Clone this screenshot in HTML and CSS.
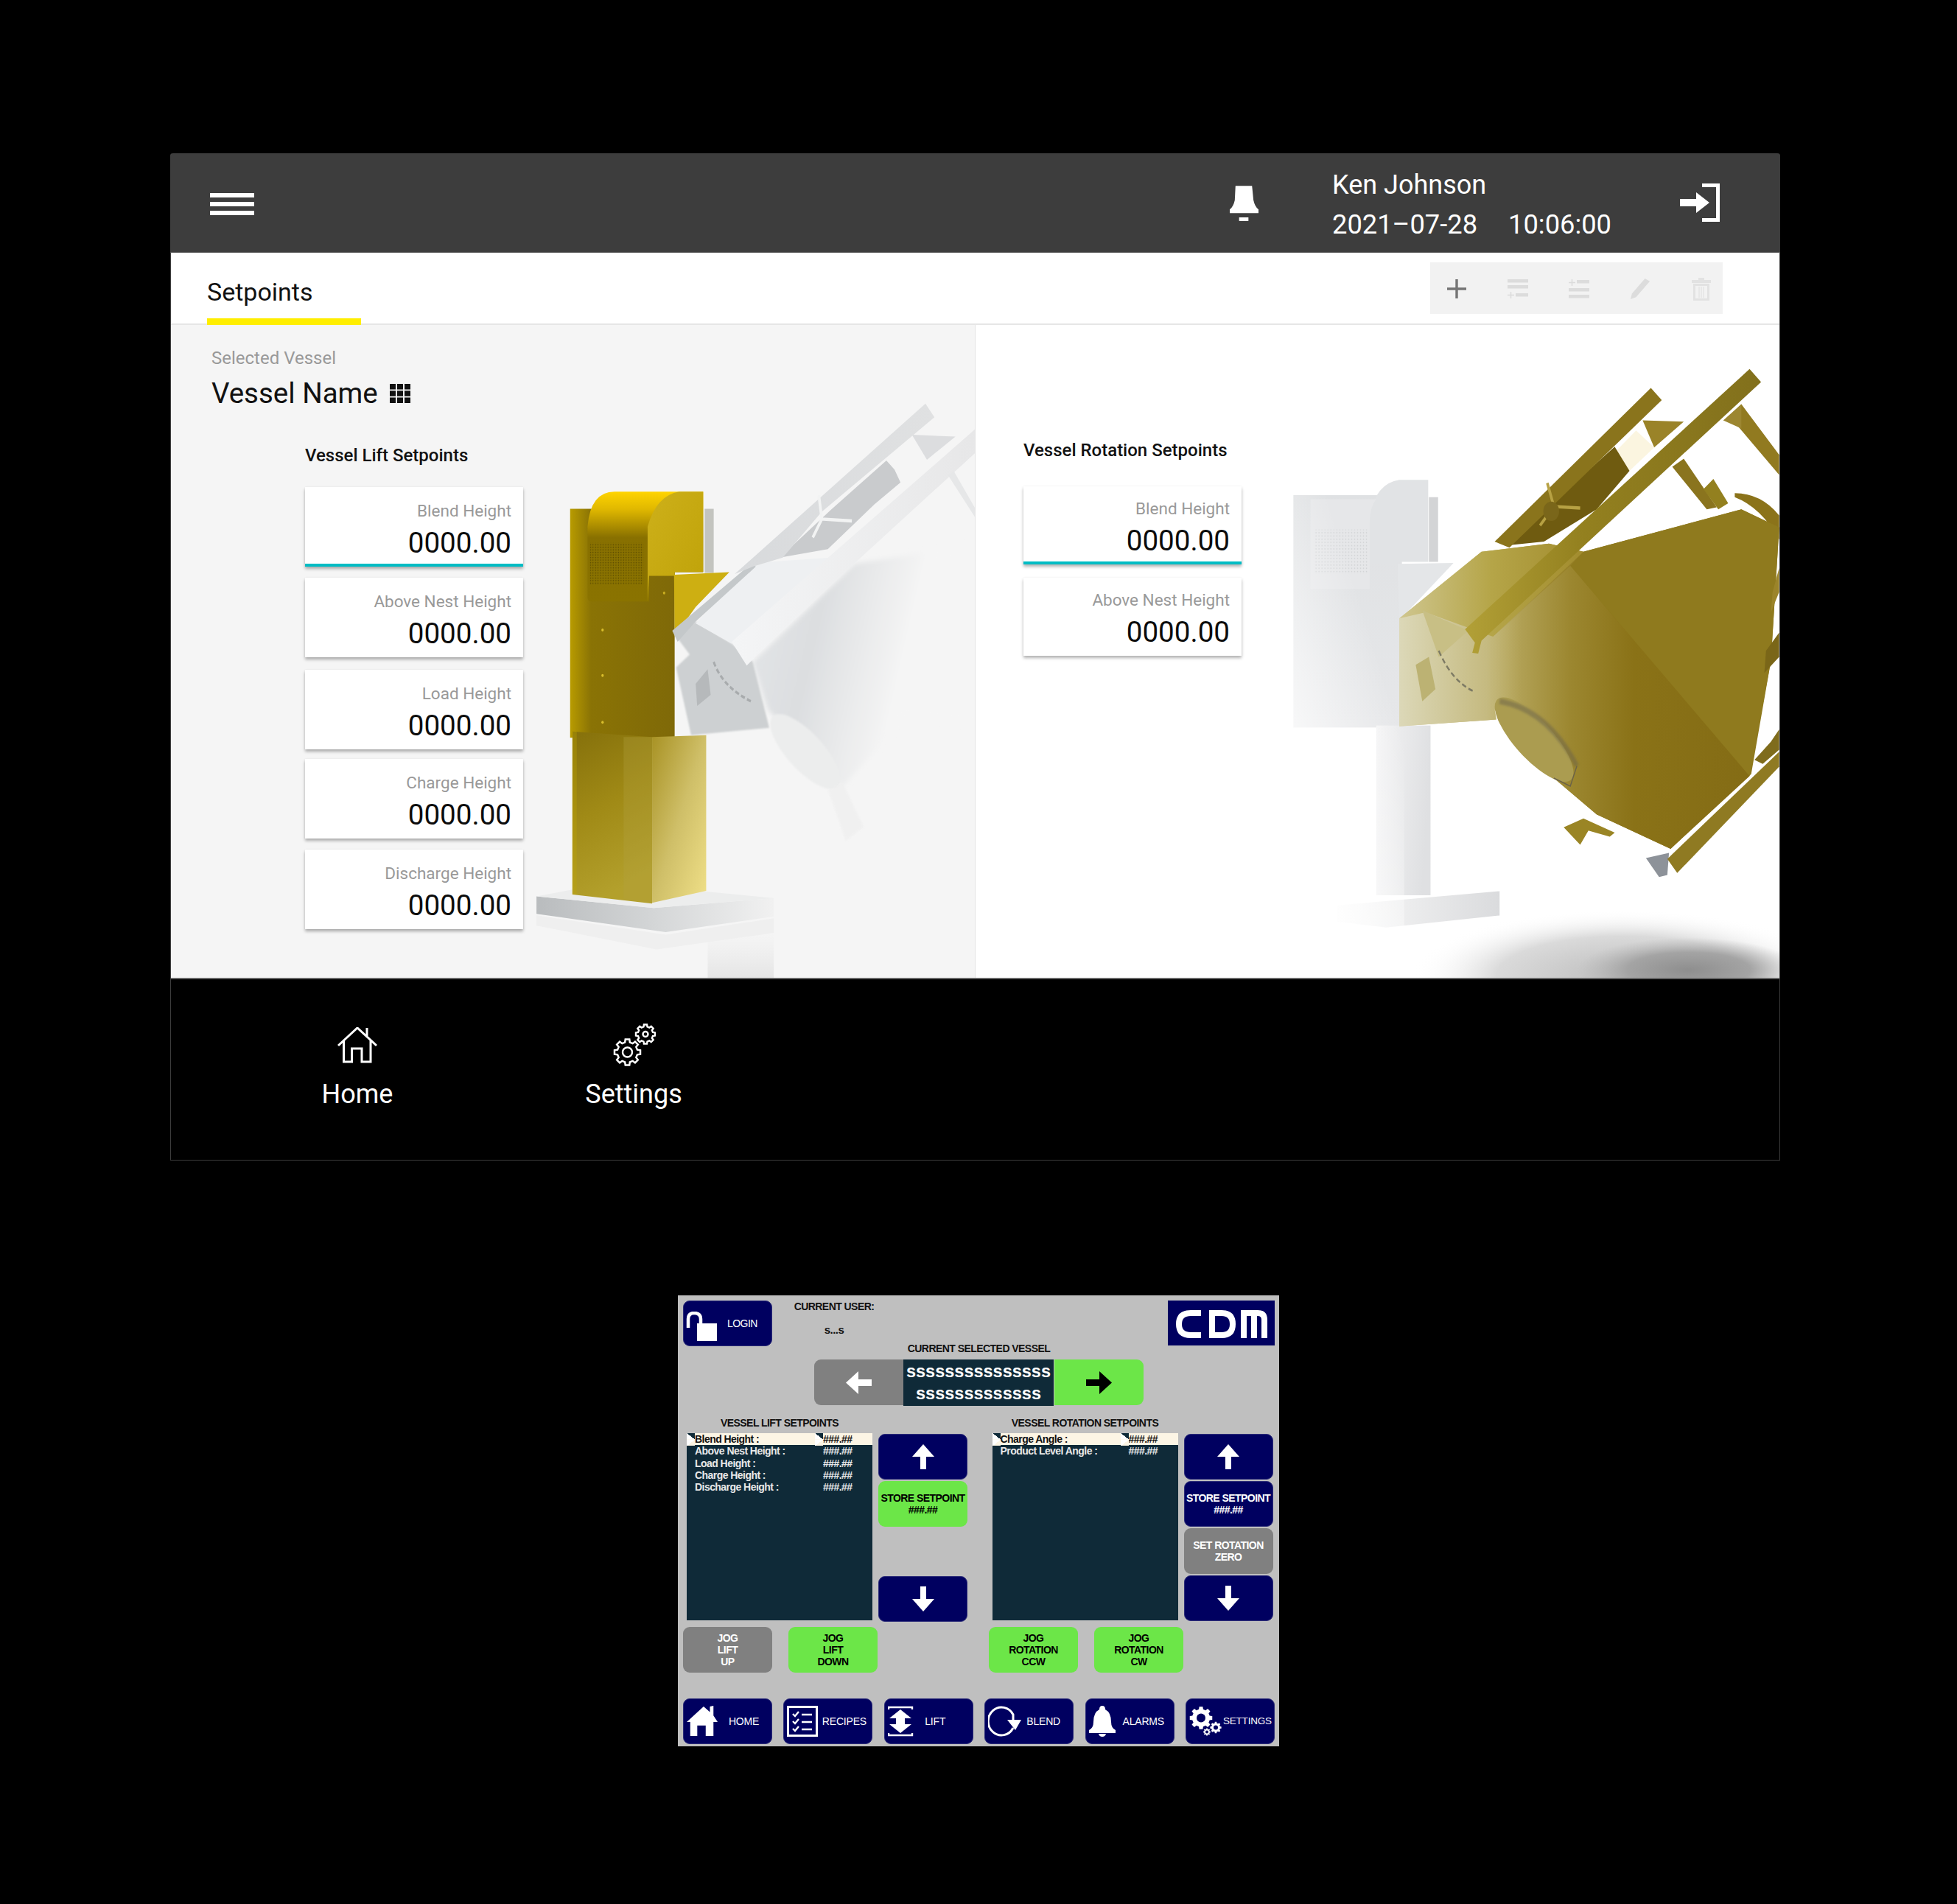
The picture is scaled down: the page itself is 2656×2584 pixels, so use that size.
FILE: index.html
```html
<!DOCTYPE html>
<html lang="en">
<head>
<meta charset="utf-8">
<title>Setpoints</title>
<link rel="stylesheet" href="styles.css">
</head>
<body>
<svg class="sprite" aria-hidden="true">
  <symbol id="gear" viewBox="-11 -11 22 22" overflow="visible">
    <polygon points="-1.89,-7.57 -1.56,-9.88 1.56,-9.88 1.89,-7.57 4.02,-6.69 5.88,-8.09 8.09,-5.88 6.69,-4.02 7.57,-1.89 9.88,-1.56 9.88,1.56 7.57,1.89 6.69,4.02 8.09,5.88 5.88,8.09 4.02,6.69 1.89,7.57 1.56,9.88 -1.56,9.88 -1.89,7.57 -4.02,6.69 -5.88,8.09 -8.09,5.88 -6.69,4.02 -7.57,1.89 -9.88,1.56 -9.88,-1.56 -7.57,-1.89 -6.69,-4.02 -8.09,-5.88 -5.88,-8.09 -4.02,-6.69"/>
  </symbol>
</svg>

<main class="window">
  <header class="topbar">
    <div class="burger"><i></i><i></i><i></i></div>
    <svg class="bell" viewBox="0 0 40 50"><path d="M8 0H31L33 20Q35 29 40 33V38H0V33Q5 29 7 20Z"/><rect x="13" y="44" width="13" height="5"/></svg>
    <div class="user">
      <div class="user-name">Ken Johnson</div>
      <div class="user-time"><span>2021–07-28</span><span>10:06:00</span></div>
    </div>
    <svg class="exit" viewBox="0 0 54 52"><path d="M30 2.500H51.500V49.500H30" fill="none" stroke="#fff" stroke-width="5"/><path d="M0 21H22V12L40 26L22 40V31H0Z" fill="#fff"/></svg>
  </header>

  <div class="tabbar">
    <div class="tab">Setpoints</div>
    <div class="tools">
      <svg class="tool" viewBox="0 0 26 26"><path d="M13 0V26M0 13H26" stroke="#757575" stroke-width="3.4" fill="none"/></svg>
      <svg class="tool" viewBox="0 0 28 26"><path d="M0 0H28V4.500H0ZM0 8H28V12.500H0ZM11 19H28V23.500H11Z" fill="#dcdcdc"/><path d="M4.500 17V26M0 21.500H9" stroke="#dcdcdc" stroke-width="1.600"/></svg>
      <svg class="tool" viewBox="0 0 28 26"><path d="M11 1H28V5.500H11ZM0 12H28V16.500H0ZM0 21H28V25.500H0Z" fill="#dcdcdc"/><path d="M4.500 0V9M0 4.500H9" stroke="#dcdcdc" stroke-width="1.600"/></svg>
      <svg class="tool" viewBox="0 0 28 30"><path d="M21 0L28 4L8 27L0 30L2 22Z" fill="#dcdcdc"/></svg>
      <svg class="tool" viewBox="0 0 26 32"><path d="M0 4H9V1H17V4H26V8H0ZM2 9H24V32H2ZM5 12V29H21V12Z" fill="#e2e2e2"/><path d="M10 13V28M13 13V28M16 13V28" stroke="#e2e2e2" stroke-width="1.200"/></svg>
    </div>
  </div>

  <div class="panels">
    <section class="panel panel-lift">
      <svg class="scene" viewBox="232 441 1092 886" aria-hidden="true">
        <defs>
          <linearGradient id="hoodG" x1="0" y1="0" x2="0" y2="1"><stop offset="0" stop-color="#ffd400"/><stop offset=".16" stop-color="#e0b800"/><stop offset=".42" stop-color="#887000"/><stop offset="1" stop-color="#8a7300"/></linearGradient>
          <linearGradient id="hoodS" x1="0" y1="0" x2="1" y2="1"><stop offset="0" stop-color="#cdb01a"/><stop offset="1" stop-color="#bfa208"/></linearGradient>
          <linearGradient id="bodyG" x1="0" y1="0" x2="1" y2="0"><stop offset="0" stop-color="#b89b00"/><stop offset=".2" stop-color="#8a7305"/><stop offset="1" stop-color="#7f6908"/></linearGradient>
          <linearGradient id="legL" x1="0" y1="0" x2=".25" y2="1"><stop offset="0" stop-color="#85700b"/><stop offset=".5" stop-color="#a08a16"/><stop offset="1" stop-color="#b3a02c"/></linearGradient>
          <linearGradient id="legR" x1="0" y1="0" x2="1" y2="1"><stop offset="0" stop-color="#a89224"/><stop offset=".5" stop-color="#cfbf68"/><stop offset="1" stop-color="#f0e088"/></linearGradient>
          <linearGradient id="baseG" x1="0" y1="0" x2="1" y2="0"><stop offset="0" stop-color="#b9bcbe"/><stop offset=".5" stop-color="#d4d6d7"/><stop offset="1" stop-color="#f1f1f1"/></linearGradient>
          <linearGradient id="coneG" x1="0" y1="0" x2="1" y2=".25"><stop offset="0" stop-color="#e4e6e8"/><stop offset=".35" stop-color="#dcdee0"/><stop offset=".75" stop-color="#f5f5f5"/></linearGradient>
          <linearGradient id="barFade" x1="0" y1="0" x2="1" y2="0"><stop offset="0" stop-color="#d8dadc"/><stop offset="1" stop-color="#e0e1e2"/></linearGradient>
          <linearGradient id="barFade2" x1="0" y1="0" x2="1" y2="0"><stop offset="0" stop-color="#f4f5f6"/><stop offset="1" stop-color="#e7e7e8"/></linearGradient>
          <linearGradient id="reflG" x1="0" y1="0" x2="0" y2="1"><stop offset="0" stop-color="#e9e9e9" stop-opacity="0"/><stop offset="1" stop-color="#e4e4e4"/></linearGradient>
          <pattern id="grille" width="8.5" height="7" patternUnits="userSpaceOnUse"><circle cx="3" cy="3" r="1.900" fill="#5c4d00"/></pattern>
          <filter id="soft"><feGaussianBlur stdDeviation="8"/></filter>
          <filter id="soft1"><feGaussianBlur stdDeviation="2.500"/></filter>
        </defs>
        <g transform="translate(700 560) scale(.408 .4975)">
          <rect x="630" y="262" width="30" height="175" fill="#c3c4bf"/>
          <polygon points="70,1320 460,1352 860,1325 860,1375 500,1418 70,1368" fill="url(#baseG)"/>
          <polygon points="70,1320 460,1352 860,1325 610,1305 200,1300" fill="#eceded"/>
          <rect x="182" y="262" width="348" height="625" fill="url(#bodyG)"/>
          <polygon points="190,870 455,885 455,1340 190,1315" fill="url(#legL)"/>
          <polygon points="455,885 635,880 635,1305 455,1338" fill="url(#legR)"/>
          <polygon points="360,885 455,885 455,1338 360,1330" fill="#b3a343" opacity=".3"/>
          <rect x="188" y="870" width="16" height="445" fill="#c4a800" opacity=".3"/>
          <path d="M240 505V310Q250 215 330 215H625V435H530V445H445V515H255Q240 515 240 505Z" fill="url(#hoodG)"/>
          <path d="M440 515V310Q470 225 545 215H625V435H530V445H445Z" fill="url(#hoodS)"/>
          <rect x="248" y="355" width="178" height="115" fill="url(#grille)"/>
          <polygon points="528,442 712,435 600,530 530,610" fill="#cdaf12"/>
          <circle cx="290" cy="593" r="4" fill="#d8bd2c"/><circle cx="290" cy="717" r="4" fill="#d8bd2c"/><circle cx="290" cy="845" r="4" fill="#d8bd2c"/><circle cx="495" cy="492" r="4" fill="#c8ac20"/>

          <polygon points="1130,412 1530,360 1530,850 1300,830 1090,1020 840,810 790,680" fill="url(#coneG)" filter="url(#soft)"/>
          <polygon points="530,605 580,660 535,695 585,880 845,860 790,680 720,630 600,570" fill="#cdd0d2" filter="url(#soft1)"/>
          <polygon points="600,575 790,410 1100,392 720,630" fill="#eef0f2"/>
          <polygon points="522,595 790,408 800,420 600,570 540,625" fill="#c4c8ca"/>
          <polygon points="880,395 1050,265 1235,130 1262,155 1282,190 1195,250 1040,372" fill="#c9cbcd"/>
          <polygon points="730,440 1365,-25 1395,12 1020,270 890,395 790,420" fill="url(#barFade)"/>
          <polygon points="720,625 1530,45 1530,110 1130,410 800,665 770,690" fill="url(#barFade2)"/>
          <polygon points="1320,60 1465,65 1370,128" fill="#dcdddf"/>
          <polygon points="1440,170 1460,160 1530,260 1530,285" fill="#e6e7e8"/>
          <path d="M1010 225L1020 290L1120 295M1020 290L990 340" stroke="#f2f3f3" stroke-width="9" fill="none"/>
          <polygon points="600,740 640,700 650,770 605,800" fill="#b6b9bb"/>
          <path d="M660 680Q690 750 790 790" stroke="#8f9294" stroke-width="7" stroke-dasharray="14 8" fill="none" opacity=".6"/>
          <ellipse cx="965" cy="925" rx="145" ry="55" transform="rotate(40 965 925)" fill="#eceded" filter="url(#soft1)"/>
          <polygon points="1040,1030 1090,1010 1160,1130 1100,1170" fill="#efefef" opacity=".7" filter="url(#soft1)"/>
          <rect x="640" y="1420" width="220" height="128" fill="url(#reflG)"/>
          <polygon points="70,1400 470,1465 860,1420 860,1380 500,1425 70,1372" fill="#efefef"/>
        </g>
      </svg>
      <div class="vessel">
        <div class="vessel-label">Selected Vessel</div>
        <div class="vessel-name">Vessel Name
          <svg class="grid-ico" viewBox="0 0 28 26"><path d="M0 0H8V7.500H0ZM10 0H18V7.500H10ZM20 0H28V7.500H20ZM0 9.300H8V16.700H0ZM10 9.300H18V16.700H10ZM20 9.300H28V16.700H20ZM0 18.500H8V26H0ZM10 18.500H18V26H10ZM20 18.500H28V26H20Z"/></svg>
        </div>
      </div>
      <div class="setgroup">
        <h2 class="set-title">Vessel Lift Setpoints</h2>
        <div class="card card-on"><div class="card-label">Blend Height</div><div class="card-value">0000.00</div></div>
        <div class="card"><div class="card-label">Above Nest Height</div><div class="card-value">0000.00</div></div>
        <div class="card"><div class="card-label">Load Height</div><div class="card-value">0000.00</div></div>
        <div class="card"><div class="card-label">Charge Height</div><div class="card-value">0000.00</div></div>
        <div class="card"><div class="card-label">Discharge Height</div><div class="card-value">0000.00</div></div>
      </div>
    </section>

    <section class="panel panel-rot">
      <svg class="scene" viewBox="1324 441 1090 886" aria-hidden="true">
        <defs>
          <linearGradient id="ghost" x1="1" y1="0" x2="1" y2="1"><stop offset="0" stop-color="#dfe1e3"/><stop offset="1" stop-color="#e6e7e9"/></linearGradient>
          <linearGradient id="ghostFade" x1="0" y1="1" x2=".62" y2=".25"><stop offset=".12" stop-color="#fff" stop-opacity="1"/><stop offset="1" stop-color="#fff" stop-opacity="0"/></linearGradient>
          <linearGradient id="ghostLeg" x1="0" y1="0" x2="1" y2=".2"><stop offset="0" stop-color="#f4f4f5"/><stop offset="1" stop-color="#dfe0e2"/></linearGradient>
          <linearGradient id="ghostBase" x1="0" y1="0" x2="1" y2="0"><stop offset="0" stop-color="#fafafa"/><stop offset="1" stop-color="#dadbdd"/></linearGradient>
          <linearGradient id="faceBase" x1="0" y1="0" x2="1" y2="0"><stop offset="0" stop-color="#d9d4ae"/><stop offset=".2" stop-color="#c4b874"/><stop offset=".38" stop-color="#9f8a33"/><stop offset=".55" stop-color="#8a7318"/><stop offset="1" stop-color="#8f7a1e"/></linearGradient>
          <linearGradient id="faceLow" x1="0" y1="0" x2="1" y2="0"><stop offset="0" stop-color="#bcae68"/><stop offset=".3" stop-color="#9c8730"/><stop offset=".55" stop-color="#8a7217"/><stop offset="1" stop-color="#846c15"/></linearGradient>
          <linearGradient id="faceTop" x1="0" y1="0" x2="1" y2="0"><stop offset="0" stop-color="#cfc68f"/><stop offset=".5" stop-color="#b5a548"/><stop offset="1" stop-color="#a28c2e"/></linearGradient>
          <linearGradient id="faceLeft" x1="0" y1="0" x2="1" y2="0"><stop offset="0" stop-color="#dcd8b8"/><stop offset=".72" stop-color="#c5ba80"/><stop offset="1" stop-color="#bcae68" stop-opacity="0"/></linearGradient>
          <linearGradient id="barG" x1="0" y1="0" x2="1" y2="0"><stop offset="0" stop-color="#b2a037"/><stop offset=".4" stop-color="#93801f"/><stop offset="1" stop-color="#82701c"/></linearGradient>
          <radialGradient id="shadowG"><stop offset="0" stop-color="#8e8e8e"/><stop offset=".55" stop-color="#a4a4a4"/><stop offset="1" stop-color="#bbb" stop-opacity="0"/></radialGradient>
          <radialGradient id="shadowW"><stop offset="0" stop-color="#bdbdbd"/><stop offset=".6" stop-color="#dadada"/><stop offset="1" stop-color="#fff" stop-opacity="0"/></radialGradient>
          <pattern id="grille2" width="9" height="8" patternUnits="userSpaceOnUse"><circle cx="3" cy="3" r="1.700" fill="#cfd1d3"/></pattern>
          <filter id="soft2"><feGaussianBlur stdDeviation="3"/></filter>
        </defs>
        <g transform="translate(1720 480) scale(.4464 .5485)">
          <rect x="78" y="350" width="330" height="575" fill="url(#ghost)"/>
          <rect x="330" y="920" width="165" height="420" fill="url(#ghostLeg)"/>
          <polygon points="210,1365 705,1330 705,1390 360,1420 210,1405" fill="url(#ghostBase)"/>
          <rect x="490" y="355" width="28" height="160" fill="#d3d4d6"/>
          <path d="M310 575V400Q330 320 400 312H488V515H395V520H310Z" fill="#e1e3e5"/>
          <path d="M130 582V360H330Q310 380 310 420V582Z" fill="#e6e7e9"/>
          <rect x="140" y="435" width="165" height="110" fill="url(#grille2)"/>
          <polygon points="395,520 565,518 400,660" fill="#e4e6e8"/>
          <rect x="70" y="340" width="345" height="1090" fill="url(#ghostFade)"/>
          <ellipse cx="1080" cy="1540" rx="640" ry="165" fill="url(#shadowW)"/>
          <ellipse cx="1280" cy="1525" rx="340" ry="80" fill="url(#shadowG)"/>

          <polygon points="1140,165 1265,168 1175,232" fill="#9a8328"/>
          <polygon points="1060,240 1120,190 1175,232 1100,290" fill="#fbf5e0"/>
          <polygon points="1425,175 1415,145 1440,125 1555,250 1555,300" fill="#917a20"/>
          <polygon points="1385,165 1440,125 1440,185" fill="#9c8630"/>
          <polygon points="1230,280 1265,260 1365,380 1335,385" fill="#8a741e"/>
          <polygon points="1325,335 1355,310 1400,370 1370,385" fill="#93801f"/>
          <path d="M1420 345Q1500 345 1555 400V460Q1500 380 1420 355Z" fill="#8b731a"/>

          <polygon points="720,475 1055,230 1100,290 1000,385 840,465" fill="#6f5b10"/>
          <polygon points="690,465 1165,85 1198,115 735,480" fill="#8a741c"/>
          <path d="M850 320L870 378L950 382M870 378L828 425" stroke="#b7a143" stroke-width="8" fill="none"/>
          <circle cx="862" cy="390" r="24" fill="#7a661a"/>

          <polygon points="400,655 650,490 855,470 960,490 1440,385 1555,430 1530,760 1470,1040 1225,1225 1000,1140 870,1050 690,880 695,905 400,922" fill="url(#faceBase)"/>
          <polygon points="920,525 960,490 1440,385 1555,430 1530,760 1465,1045" fill="#8f7a1e"/>
          <polygon points="685,700 920,525 1465,1045 1225,1225 1000,1140 870,1050 690,880" fill="url(#faceLow)"/>
          <polygon points="400,655 650,490 855,470 960,490 685,700 620,690" fill="url(#faceTop)"/>
          <polygon points="400,655 480,640 685,700 770,640 770,955 690,880 695,905 400,922" fill="url(#faceLeft)"/>
          <polygon points="470,635 610,685 520,750" fill="#c8bf85"/>
          <path d="M520 735Q560 810 625 835" stroke="#7d7a64" stroke-width="5" stroke-dasharray="14 8" fill="none"/>
          <polygon points="450,770 490,750 510,830 470,860" fill="#bcb273"/>
          <polygon points="600,682 1465,38 1500,70 650,710 640,742 622,740 630,715" fill="url(#barG)"/>
          <ellipse cx="810" cy="955" rx="150" ry="52" transform="rotate(40 810 955)" fill="#ab9c50"/>
          <path d="M705 860Q850 880 940 1020" stroke="#6a624a" stroke-width="14" fill="none" opacity=".5" filter="url(#soft2)"/>
          <path d="M870 1050L920 1070L940 1020" stroke="#6a624a" stroke-width="3" fill="none"/>
          <polygon points="900,1172 960,1150 1055,1185 1040,1195 975,1180 950,1215" fill="#9a8525"/>
          <polygon points="1150,1248 1220,1235 1215,1290 1190,1295" fill="#8d9299"/>
          <polygon points="1215,1250 1555,985 1555,1022 1245,1285" fill="#8f7a22"/>
          <polygon points="1480,1005 1530,960 1555,930 1555,980 1505,1015" fill="#7f6c1c"/>
          <polygon points="1510,790 1555,750 1555,690 1515,735" fill="#7a6618"/>
          <polygon points="1530,640 1555,590 1555,530 1535,590" fill="#9b842a"/>
        </g>
      </svg>
      <div class="setgroup">
        <h2 class="set-title">Vessel Rotation Setpoints</h2>
        <div class="card card-on"><div class="card-label">Blend Height</div><div class="card-value">0000.00</div></div>
        <div class="card"><div class="card-label">Above Nest Height</div><div class="card-value">0000.00</div></div>
      </div>
    </section>
  </div>

  <footer class="dock">
    <div class="dock-item">
      <svg class="dock-ico dock-home" viewBox="0 0 54 49"><path d="M1 25L27 1L53 25M40 1V13M8.500 17V47H19.500V29H33V47H45V17" fill="none" stroke="#fff" stroke-width="3"/></svg>
      <div>Home</div>
    </div>
    <div class="dock-item">
      <svg class="dock-ico dock-gears" viewBox="0 0 58 58">
        <use href="#gear" x="0" y="19.500" width="39" height="39" class="gear-line gear-big"/>
        <circle cx="19.500" cy="39" r="6.500" class="gear-line"/>
        <use href="#gear" x="29.500" y="0" width="29" height="29" class="gear-line gear-small"/>
        <circle cx="44" cy="14.500" r="3.500" class="gear-line"/>
      </svg>
      <div>Settings</div>
    </div>
  </footer>
</main>

<section class="hmi">
  <div class="hmi-top">
    <div class="btn btn-navy btn-login">
      <svg class="ico-lock" viewBox="0 0 42 42"><path d="M3 22V10Q3 2 11 2Q20 2 20 10V16" fill="none" stroke="#fff" stroke-width="4.500"/><rect x="15" y="16" width="27" height="24" fill="#fff"/></svg>
      <span>LOGIN</span>
    </div>
    <div class="hmi-user">
      <div>CURRENT USER:</div>
      <div class="hmi-user-val">s...s</div>
    </div>
    <div class="hmi-logo">
      <svg viewBox="0 0 145 61"><path d="M45 17H31Q15 17 15 32Q15 47 31 47H45M60 17H73Q88 17 88 32Q88 47 73 47H60ZM103 51V17H122Q131 17 131 26V51M117 17V51" fill="none" stroke="#fff" stroke-width="8"/></svg>
    </div>
  </div>
  <div class="hmi-caption">CURRENT SELECTED VESSEL</div>
  <div class="hmi-select">
    <div class="btn btn-grey"><svg class="ico-big" viewBox="0 0 35 31"><path d="M0 15.500L17 0V11H35V20H17V31Z" fill="#fff"/></svg></div>
    <div class="vessel-box">
      <div>sssssssssssssss</div>
      <div>sssssssssssss</div>
    </div>
    <div class="btn btn-green"><svg class="ico-big" viewBox="0 0 35 31"><path d="M35 15.500L18 0V11H0V20H18V31Z" fill="#000"/></svg></div>
  </div>

  <div class="hmi-mid">
    <div class="hmi-col">
      <div class="hmi-title">VESSEL LIFT SETPOINTS</div>
      <div class="hmi-work">
        <div class="list">
          <div class="row row-on"><span>Blend Height :</span><span>###.##</span></div>
          <div class="row"><span>Above Nest Height :</span><span>###.##</span></div>
          <div class="row"><span>Load Height :</span><span>###.##</span></div>
          <div class="row"><span>Charge Height :</span><span>###.##</span></div>
          <div class="row"><span>Discharge Height :</span><span>###.##</span></div>
        </div>
        <div class="stack">
          <div class="btn btn-navy"><svg class="ico-arrow" viewBox="0 0 30 34"><path d="M15 0L30 17H19V34H11V17H0Z" fill="#fff"/></svg></div>
          <div class="btn btn-green btn-text">STORE SETPOINT<br>###.##</div>
          <div class="btn btn-navy stack-end"><svg class="ico-arrow" viewBox="0 0 30 34"><path d="M15 34L30 17H19V0H11V17H0Z" fill="#fff"/></svg></div>
        </div>
      </div>
    </div>
    <div class="hmi-col hmi-col-r">
      <div class="hmi-title">VESSEL ROTATION SETPOINTS</div>
      <div class="hmi-work">
        <div class="list">
          <div class="row row-on"><span>Charge Angle :</span><span>###.##</span></div>
          <div class="row"><span>Product Level Angle :</span><span>###.##</span></div>
        </div>
        <div class="stack stack-right">
          <div class="btn btn-navy"><svg class="ico-arrow" viewBox="0 0 30 34"><path d="M15 0L30 17H19V34H11V17H0Z" fill="#fff"/></svg></div>
          <div class="btn btn-navy btn-text">STORE SETPOINT<br>###.##</div>
          <div class="btn btn-grey btn-text">SET ROTATION<br>ZERO</div>
          <div class="btn btn-navy"><svg class="ico-arrow" viewBox="0 0 30 34"><path d="M15 34L30 17H19V0H11V17H0Z" fill="#fff"/></svg></div>
        </div>
      </div>
    </div>
  </div>

  <div class="hmi-jog">
    <div class="btn btn-grey btn-text">JOG<br>LIFT<br>UP</div>
    <div class="btn btn-green btn-text">JOG<br>LIFT<br>DOWN</div>
    <div class="btn btn-green btn-text jog-ccw">JOG<br>ROTATION<br>CCW</div>
    <div class="btn btn-green btn-text">JOG<br>ROTATION<br>CW</div>
  </div>

  <nav class="hmi-nav">
    <div class="btn btn-navy btn-nav">
      <svg class="nav-ico" preserveAspectRatio="xMinYMid" viewBox="0 0 44 44"><path d="M0 23L24 1L33 9V1L38 0V14L44 23L38 23V43H27V28H15V43H5V23Z" fill="#fff"/></svg>
      <span>HOME</span>
    </div>
    <div class="btn btn-navy btn-nav">
      <svg class="nav-ico" preserveAspectRatio="xMinYMid" viewBox="0 0 42 42"><rect x="1.500" y="1.500" width="39" height="39" fill="none" stroke="#fff" stroke-width="3"/><path d="M8 11L11 14L16 8M8 21L11 24L16 18M8 31L11 34L16 28M20 12H34M20 22H34M20 32H34" fill="none" stroke="#fff" stroke-width="2.400"/></svg>
      <span>RECIPES</span>
    </div>
    <div class="btn btn-navy btn-nav btn-nav-lift">
      <svg class="nav-ico" preserveAspectRatio="xMinYMid" viewBox="0 0 34 42"><path d="M1 5V2H33V5M1 37V40H33V37" fill="none" stroke="#fff" stroke-width="2.400"/><path d="M17 5L32 17H23V25H32L17 37L2 25H11V17H2Z" fill="#fff"/></svg>
      <span>LIFT</span>
    </div>
    <div class="btn btn-navy btn-nav btn-nav-blend">
      <svg class="nav-ico" preserveAspectRatio="xMinYMid" viewBox="0 0 46 42"><path d="M34 30A18 19 0 1 1 34 12V20" fill="none" stroke="#fff" stroke-width="3"/><path d="M26 19H45L37 33Z" fill="#fff"/></svg>
      <span>BLEND</span>
    </div>
    <div class="btn btn-navy btn-nav btn-nav-alarm">
      <svg class="nav-ico" preserveAspectRatio="xMinYMid" viewBox="0 0 36 42"><path d="M18 0Q22 0 22 5Q30 9 30 22Q30 30 36 33V37H0V33Q6 30 6 22Q6 9 14 5Q14 0 18 0Z" fill="#fff"/><path d="M13 38H23Q22 42 18 42Q14 42 13 38Z" fill="#fff"/></svg>
      <span>ALARMS</span>
    </div>
    <div class="btn btn-navy btn-nav btn-nav-gears">
      <svg class="nav-ico" viewBox="0 0 46 42">
        <use href="#gear" x="-1.500" y="-.5" width="35" height="34" class="gear-solid"/>
        <use href="#gear" x="27" y="21" width="18" height="17" class="gear-solid"/>
        <use href="#gear" x="18" y="30" width="12" height="11" class="gear-solid"/>
        <circle cx="16" cy="16.500" r="6" fill="#000060"/><circle cx="36" cy="29.500" r="3" fill="#000060"/><circle cx="24" cy="35.500" r="2" fill="#000060"/>
      </svg>
      <span>SETTINGS</span>
    </div>
  </nav>
</section>
</body>
</html>
```

FILE: styles.css
```css
* { box-sizing: border-box; }
html, body { margin: 0; padding: 0; }
body {
  width: 2656px;
  height: 2584px;
  background: #000;
  padding: 208px 0 0 231px;
  font-family: Roboto, "Liberation Sans", sans-serif;
  overflow: hidden;
}
.sprite { position: absolute; width: 0; height: 0; }

/* main app window */
.window {
  width: 2185px;
  height: 1367px;
  display: flex;
  flex-direction: column;
  border: 1px solid #3c3c3c;
  border-top: 0;
  border-radius: 4px 4px 0 0;
  background: #000;
}
.topbar {
  height: 135px;
  flex: none;
  margin: 0 -1px;
  background: #3d3d3d;
  border-radius: 4px 4px 0 0;
  border-bottom: 1px solid #555;
  display: flex;
  align-items: flex-start;
  color: #fff;
}
.burger {
  margin: 54px 0 0 54px;
  width: 60px;
  display: flex;
  flex-direction: column;
  gap: 6px;
}
.burger i { display: block; height: 6px; background: #fff; }
.bell { width: 39px; height: 49px; margin: 44px 0 0 1324px; fill: #fff; }
.user { margin: 17px 0 0 100px; font-size: 36px; width: 472px; }
.user-name { line-height: 53px; }
.user-time { line-height: 53px; display: flex; gap: 42px; font-size: 36.300px; }
.exit { width: 54px; height: 52px; margin-top: 41px; }

.tabbar {
  height: 98px;
  flex: none;
  background: #fff;
  border-bottom: 2px solid #e6e6e6;
  display: flex;
  align-items: flex-start;
  position: relative;
}
.tab {
  margin-left: 49px;
  width: 209px;
  height: 98px;
  padding-top: 33px;
  font-size: 34px;
  line-height: 40px;
  color: #111;
  border-bottom: 9px solid #ffee00;
}
.tools {
  margin: 13px 0 0 1451px;
  width: 397px;
  height: 70px;
  background: #f2f2f2;
  display: flex;
  align-items: center;
  padding: 2px 0 0 23px;
}
.tool { width: 28px; height: 28px; margin-right: 55px; flex: none; }
.tool:first-child { width: 26px; height: 26px; margin-right: 56px; }
.tool:last-child { height: 32px; }

.panels {
  flex: none;
  height: 888px;
  display: grid;
  grid-template-columns: 1092px 1fr;
  border-bottom: 2px solid #666;
}
.panel { position: relative; overflow: hidden; }
.panel-lift { background: #f5f5f5; border-right: 1px solid #e4e4e4; }
.panel-rot { background: #fff; }
.scene { position: absolute; inset: 0; width: 100%; height: 100%; }

.vessel { position: relative; padding: 30px 0 0 55px; }
.vessel-label { font-size: 24px; line-height: 30px; color: #999; }
.vessel-name {
  display: flex;
  align-items: center;
  gap: 16px;
  margin-top: 11px;
  font-size: 38.500px;
  line-height: 44px;
  color: #111;
}
.grid-ico { width: 28px; height: 26px; fill: #111; }

.setgroup { position: relative; width: 296px; }
.panel-lift .setgroup { margin: 47px 0 0 182px; }
.panel-rot .setgroup { margin: 155px 0 0 65px; }
.set-title {
  margin: 0 0 28px;
  font-size: 24px;
  line-height: 30px;
  font-weight: 500;
  color: #111;
}
.panel-rot .set-title { margin-bottom: 34px; }
.card {
  height: 108px;
  margin-bottom: 15px;
  background: #fff;
  padding: 17px 16px 0 0;
  text-align: right;
  box-shadow: 0 3px 4px rgba(0,0,0,.3), 0 0 2px rgba(0,0,0,.06);
}
.panel-rot .card { height: 106px; margin-bottom: 18px; padding-top: 15px; }
.panel-lift .card:nth-of-type(2) { margin-bottom: 17px; }
.panel-lift .card:nth-of-type(3) { margin-bottom: 13px; }
.card-on { border-bottom: 4px solid #00bcc4; }
.card-label { font-size: 22.500px; line-height: 30px; color: #999; }
.card-value { font-size: 38.600px; line-height: 44px; color: #0c0c0c; margin-top: 7px; }

.dock {
  flex: 1;
  display: flex;
  color: #fff;
  font-size: 36px;
  line-height: 44px;
  text-align: center;
}
.dock-item { display: flex; flex-direction: column; align-items: center; margin-top: 58px; width: 200px; margin-left: 153px; }
.dock-item + .dock-item { margin-left: 188px; width: 174px; }
.dock-ico { display: block; }
.dock-home { width: 54px; height: 49px; margin: 7px 0 20px; }
.dock-gears { width: 58px; height: 58px; margin: 2px 0 16px 2px; }
.gear-line { fill: none; stroke: #fff; stroke-width: 2.400; }
.gear-big { stroke-width: 1.400; }
.gear-small { stroke-width: 1.800; }
.gear-solid { fill: #fff; }

/* HMI */
.hmi {
  position: relative;
  width: 816px;
  height: 612px;
  margin: 183px 0 0 689px;
  background: #bfbfbf;
  padding: 7px 6px 0 7px;
  font-family: "Liberation Sans", Arial, sans-serif;
  font-weight: 700;
  font-size: 14px;
  letter-spacing: -.55px;
  line-height: 16.300px;
  color: #111;
}
.btn {
  width: 121px;
  height: 62px;
  border-radius: 9px;
  display: flex;
  align-items: center;
  justify-content: center;
  text-align: center;
  flex: none;
}
.btn-navy { background: #000060; color: #fff; border: 1px solid #2b2b78; }
.btn-grey { background: #808080; color: #fff; }
.btn-green { background: #6ce648; color: #000; }
.hmi-top { display: flex; height: 62px; align-items: flex-start; }
.btn-login { justify-content: flex-start; gap: 14px; padding-left: 3px; font-weight: 400; }
.ico-lock { width: 42px; height: 42px; margin-top: 10px; }
.hmi-user { width: 164px; margin-left: 3px; text-align: center; }
.hmi-user-val { margin-top: 16px; font-size: 15px; }
.hmi-logo { width: 145px; height: 61px; margin-left: 372px; background: #000060; }
.hmi-logo svg { display: block; width: 145px; height: 61px; }
.hmi-caption { text-align: center; margin: -5px 0 0 -1px; height: 16px; padding-left: 1px; }
.hmi-select {
  display: flex;
  width: 447px;
  margin: 7px 0 0 178px;
  height: 63px;
}
.hmi-select .btn-grey { border-radius: 9px 0 0 9px; }
.hmi-select .btn-green { border-radius: 0 9px 9px 0; margin-left: 1px; }
.ico-big { width: 35px; height: 31px; }
.vessel-box {
  width: 204px;
  flex: none;
  background: #0f2a38;
  color: #fff;
  text-align: center;
  font-size: 23.500px;
  letter-spacing: 0;
  line-height: 30px;
  padding-top: 1px;
  overflow: hidden;
  white-space: nowrap;
}
.hmi-mid { display: flex; margin: 15px 0 0 5px; }
.hmi-col { width: 414.500px; flex: none; }
.hmi-col-r { width: 381px; }
.hmi-title { height: 22px; text-align: center; width: 252px; }
.hmi-work { display: flex; gap: 8px; height: 256px; }
.list { width: 252px; height: 254px; background: #0f2a38; color: #e8e8e8; flex: none; }
.row {
  position: relative;
  display: grid;
  grid-template-columns: 174px 1fr;
  height: 16.330px;
  line-height: 16.330px;
  padding-left: 11px;
  white-space: nowrap;
}
.row-on { background: #fcf5e5; color: #111; }
.row-on::before, .row-on::after {
  content: "";
  position: absolute;
  top: 0;
  width: 11px;
  height: 17px;
  background:
    linear-gradient(to top right, #fff 50%, #0f2a38 50%) 0 0 / 100% 50% no-repeat,
    linear-gradient(to bottom right, #fff 50%, #fcf5e5 50%) 0 100% / 100% 50% no-repeat;
}
.row-on::before { left: 0; }
.row-on::after { left: 174px; }
.stack { display: flex; flex-direction: column; gap: 2px; margin-top: 1px; }
.stack .btn { height: 62px; }
.stack-end { margin-top: auto; }
.ico-arrow { width: 30px; height: 34px; }
.btn-text { line-height: 16.300px; }
.hmi-jog { display: flex; margin-top: 7px; height: 62px; }
.hmi-jog .btn + .btn { margin-left: 22px; }
.hmi-jog .btn + .jog-ccw { margin-left: 151px; }
.hmi-nav { display: flex; justify-content: space-between; margin-top: 35px; }
.btn-nav { justify-content: flex-start; padding-left: 4px; }
.btn-nav span { flex: 1; font-weight: 400; padding-right: 6px; letter-spacing: -.2px; }
.nav-ico { height: 42px; width: 46px; flex: none; }
.btn-nav-lift span { padding-right: 32px; }
.btn-nav-blend span { padding-right: 11px; }
.btn-nav-alarm span { padding-right: 15px; }
.btn-nav-gears span { padding-right: 9px; font-size: 13.500px; }
```
